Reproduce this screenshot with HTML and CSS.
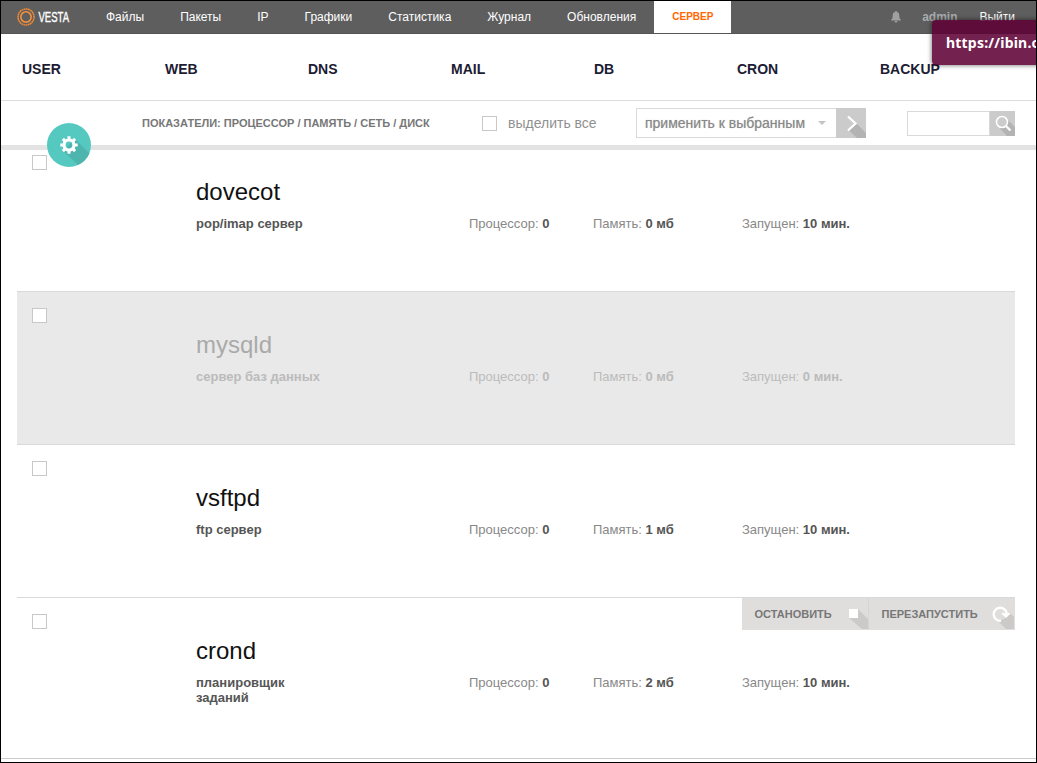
FILE: index.html
```html
<!DOCTYPE html>
<html lang="ru">
<head>
    <meta charset="UTF-8">
    <title>Vesta - СЕРВЕР</title>
    <link rel="stylesheet" href="styles.css">
</head>
<body>
    <div class="page">
        <header class="topbar">
            <a class="logo">
                <svg width="56" height="20" viewBox="0 0 56 20">
                    <circle cx="10" cy="10" r="8" fill="none" stroke="#f08a35" stroke-width="1.5" stroke-dasharray="1.8 .4"/>
                    <circle cx="10" cy="10" r="5.2" fill="none" stroke="#f7923c" stroke-width="1.6"/>
                    <text class="logo-text" x="22.500" y="15.3" textLength="30.500" lengthAdjust="spacingAndGlyphs">VESTA</text>
                </svg>
            </a>
            <nav class="menu">
                <a>Файлы</a>
                <a>Пакеты</a>
                <a>IP</a>
                <a>Графики</a>
                <a>Статистика</a>
                <a>Журнал</a>
                <a>Обновления</a>
                <a class="active">СЕРВЕР</a>
            </nav>
            <div class="user">
                <svg class="bell" width="10" height="12" viewBox="0 0 10 12">
                    <path d="M5 0C6 0 6 1 6 1C8 1.500 8.300 3 8.300 5C8.300 7 9 8 10 9V9.500H0V9C1 8 1.700 7 1.700 5C1.700 3 2 1.500 4 1C4 1 4 0 5 0ZM3.500 10H6.500C6.500 12 3.500 12 3.500 10Z" fill="#a0a0a0"/>
                </svg>
                <b class="user-name">admin</b>
                <a>Выйти</a>
            </div>
        </header>

        <nav class="sections">
            <a>USER</a>
            <a>WEB</a>
            <a>DNS</a>
            <a>MAIL</a>
            <a>DB</a>
            <a>CRON</a>
            <a>BACKUP</a>
        </nav>

        <div class="toolbar">
            <a class="settings">
                <svg width="44" height="44" viewBox="0 0 44 44">
                    <defs><clipPath id="round"><circle cx="22" cy="22" r="22"/></clipPath></defs>
                    <circle cx="22" cy="22" r="22" fill="#55c9c0"/>
                    <path d="M28 16L50 38V50H40L16 28Z" fill="#4eb5ae" clip-path="url(#round)"/>
                    <circle cx="22" cy="22" r="5" fill="none" stroke="#fff" stroke-width="3.200"/>
                    <g stroke="#fff" stroke-width="3">
                        <path d="M22 13.300V16M22 28V30.700M13.300 22H16M28 22H30.700M15.900 15.900L18 18M26 26L28.100 28.100M28.100 15.900L26 18M18 26L15.900 28.100"/>
                    </g>
                </svg>
            </a>
            <div class="graphs">ПОКАЗАТЕЛИ: ПРОЦЕССОР / ПАМЯТЬ / СЕТЬ / ДИСК</div>
            <label class="select-all"><span class="check"></span><span class="select-all-text">выделить все</span></label>
            <div class="apply">
                <div class="select">применить к выбранным<span class="arrow"></span></div>
                <svg width="30" height="30" viewBox="0 0 30 30">
                    <rect width="30" height="30" fill="#cbcbcb"/>
                    <path d="M20 15L30 25V30H21L12.500 22Z" fill="#b3b3b3"/>
                    <path d="M12 8.500L19.500 15.500L12 22.500" fill="none" stroke="#fff" stroke-width="2.300"/>
                </svg>
            </div>
            <div class="search">
                <div class="search-input"></div>
                <svg width="25" height="25" viewBox="0 0 25 25">
                    <rect width="25" height="25" fill="#cbcbcb"/>
                    <path d="M16 7L25 16V25H17L8 15.500Z" fill="#b3b3b3"/>
                    <circle cx="12" cy="11" r="5.500" fill="#cbcbcb" stroke="#fff" stroke-width="1.600"/>
                    <path d="M16 15L20.500 19.500" stroke="#fff" stroke-width="2.200"/>
                </svg>
            </div>
        </div>

        <main class="units">
            <div class="unit first">
                <span class="check"></span>
                <div class="info">
                    <div class="name">dovecot</div>
                    <div class="stats">
                        <b class="desc">pop/imap сервер</b>
                        <span>Процессор: <b>0</b></span>
                        <span>Память: <b>0 мб</b></span>
                        <span>Запущен: <b>10 мин.</b></span>
                    </div>
                </div>
            </div>
            <div class="unit stopped">
                <span class="check"></span>
                <div class="info">
                    <div class="name">mysqld</div>
                    <div class="stats">
                        <b class="desc">сервер баз данных</b>
                        <span>Процессор: <b>0</b></span>
                        <span>Память: <b>0 мб</b></span>
                        <span>Запущен: <b>0 мин.</b></span>
                    </div>
                </div>
            </div>
            <div class="unit">
                <span class="check"></span>
                <div class="info">
                    <div class="name">vsftpd</div>
                    <div class="stats">
                        <b class="desc">ftp сервер</b>
                        <span>Процессор: <b>0</b></span>
                        <span>Память: <b>1 мб</b></span>
                        <span>Запущен: <b>10 мин.</b></span>
                    </div>
                </div>
            </div>
            <div class="unit">
                <span class="check"></span>
                <div class="info">
                    <div class="name">crond</div>
                    <div class="stats">
                        <b class="desc">планировщик заданий</b>
                        <span>Процессор: <b>0</b></span>
                        <span>Память: <b>2 мб</b></span>
                        <span>Запущен: <b>10 мин.</b></span>
                    </div>
                </div>
                <div class="actions">
                    <a class="stop">ОСТАНОВИТЬ
                        <svg width="19" height="32" viewBox="0 0 19 32">
                            <path d="M9 11L19 21V31H13L0 20Z" fill="#cbcac9"/>
                            <rect y="11" width="9" height="9" fill="#fff"/>
                        </svg>
                    </a>
                    <a class="restart">ПЕРЕЗАПУСТИТЬ
                        <svg width="23" height="32" viewBox="0 0 23 32">
                            <path d="M17 14L22 19V31H14L5 22Z" fill="#cbcac9"/>
                            <circle cx="8.500" cy="16" r="6" fill="#dfdedd"/>
                            <path d="M9 22.700A6.500 6.500 0 1 1 14.700 16" fill="none" stroke="#fff" stroke-width="2.400"/>
                            <path d="M9.500 15.500L11 14.500L14 16L17 14.500L18.500 15.500L14 20Z" fill="#fff"/>
                        </svg>
                    </a>
                </div>
            </div>
        </main>
        <footer class="footer"></footer>

        <div class="link-tip">https://ibin.c</div>
    </div>
</body>
</html>
```
FILE: styles.css
```css
* { box-sizing: border-box; }
body { margin: 0; font-family: "Liberation Sans", Arial, sans-serif; font-size: 13px; color: #888; background: #fff; }
.page { position: relative; width: 1037px; height: 763px; border: 1px solid #000; overflow: hidden; display: flex; flex-direction: column; }

.topbar { display: flex; height: 34px; margin: -1px -1px 0; border: 1px solid #9b9b9b; border-bottom-color: #555; background: #5e5e5e; flex: none; font-size: 12px; }
.logo { width: 87px; padding: 6px 0 0 15px; }
.logo svg { display: block; }
.logo-text { font: 15px "Liberation Sans", Arial, sans-serif; fill: #fff; stroke: #fff; stroke-width: .4px; }
.menu { display: flex; }
.menu a { padding: 0 18px; line-height: 32px; color: #fff; }
.menu .active { margin-top: -1px; border-top: 1px solid #000; background: #fff; color: #ff6701; font-size: 10px; font-weight: bold; line-height: 32px; }
.user { display: flex; margin-left: auto; padding-right: 21px; line-height: 32px; color: #fff; }
.bell { margin: 10px 21px 0 0; }
.user-name { margin-right: 22px; color: #a8acac; }

.sections { display: flex; height: 67px; flex: none; padding-left: 21px; border-bottom: 1px solid #ddd; }
.sections a { width: 143px; line-height: 70px; font-size: 14px; font-weight: bold; color: #1c1c33; }

.toolbar { position: relative; display: flex; align-items: flex-start; height: 49px; flex: none; padding-left: 141px; border-bottom: 5px solid #e3e3e3; }
.settings { position: absolute; left: 46px; top: 22px; height: 44px; z-index: 1; }
.graphs { width: 340px; line-height: 45px; font-size: 11px; font-weight: bold; color: #777; }
.check { display: block; width: 15px; height: 15px; border: 1px solid #c8c8c8; background: #fff; flex: none; }
.select-all { display: flex; align-items: center; gap: 11px; width: 154px; height: 45px; font-size: 14px; }
.select-all-text { padding-bottom: 2px; color: #909090; }
.apply { display: flex; width: 271px; padding-top: 7px; }
.select { display: flex; align-items: center; justify-content: space-between; width: 200px; height: 30px; padding: 0 10px 0 8px; border: 1px solid #d9d9d9; border-right: 0; font-size: 14px; color: #888; white-space: nowrap; text-shadow: 0 0 1px #bbb; }
.arrow { border: 4px solid transparent; border-top-color: #c4c4c4; border-bottom: 0; }
.search { display: flex; padding-top: 10px; }
.search-input { width: 83px; height: 25px; border: 1px solid #d9d9d9; }

.units { padding: 0 21px 0 16px; flex: none; }
.unit { position: relative; display: flex; height: 153px; padding: 16px 0 0 15px; border-top: 1px solid #d9d9d9; }
.unit.first { height: 141px; padding-top: 5px; border-top: 0; }
.info { padding: 22px 0 0 149px; }
.name { font-size: 24px; line-height: 30px; color: #111; }
.stats { display: grid; grid-template-columns: 273px 124px 149px 160px; padding-top: 9px; line-height: 15px; }
.stats b { color: #555; }
.desc { max-width: 130px; }
.stopped { background: #e9e9e9; }
.stopped .name { color: #aaa; }
.stopped .stats, .stopped .stats b { color: #bbb; }

.actions { position: absolute; top: 0; right: 0; display: flex; height: 32px; background: #dfdedd; font-size: 11px; font-weight: bold; line-height: 32px; color: #777; }
.actions a { display: flex; justify-content: space-between; padding-left: 12.5px; }
.stop { width: 127px; border-right: 1px solid #d5d5d5; }
.restart { width: 146px; }

.footer { margin-top: 8px; height: 1px; flex: none; background: #ccc; }

/* link preview in the corner of the window */
.link-tip { position: absolute; left: 931px; top: 19px; width: 130px; height: 45px; padding-left: 14px; border-radius: 4px; background: rgba(94, 0, 53, .87); box-shadow: 0 0 5px rgba(0, 0, 0, .6); font: bold 14px/45px "Noto Sans", sans-serif; letter-spacing: .2px; color: #fff; }
```
